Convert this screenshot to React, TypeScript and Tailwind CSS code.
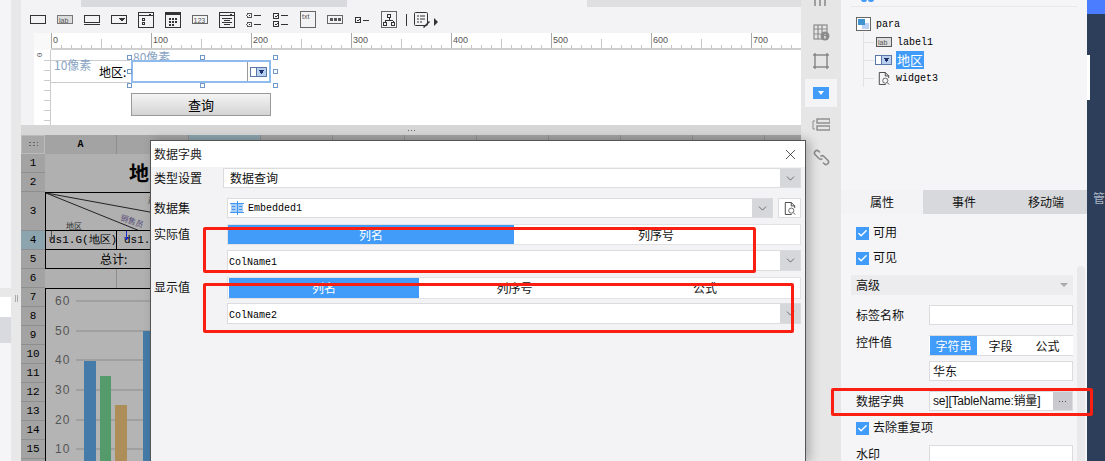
import React from 'react';
import { Check, ChevronDown, X } from 'lucide-react';

const mono = "[font-family:'Liberation_Mono',monospace]";

const ToolIcon: React.FC<{ children: React.ReactNode }> = ({ children }) => (
  <div className="flex w-[27px] shrink-0 justify-center">
    <svg width="18" height="18" viewBox="0 0 18 18" fill="none" stroke="#333" strokeWidth="1" shapeRendering="crispEdges">
      {children}
    </svg>
  </div>
);

// little dropdown widget glyph, used on the canvas and in the tree
const ComboGlyph = () => (
  <svg width="17" height="10" viewBox="0 0 17 10" shapeRendering="crispEdges">
    <rect x="0.5" y="0.5" width="16" height="9" fill="#fff" stroke="#5b77a8" />
    <rect x="7" y="1" width="9" height="8" fill="#b9cfee" />
    <line x1="6.5" y1="0" x2="6.5" y2="10" stroke="#5b77a8" />
    <path d="M8.5 3h6l-3 4z" fill="#1f2f6b" />
  </svg>
);

const PreviewGlyph = ({ size = 14 }: { size?: number }) => (
  <svg width={size} height={size + 1} viewBox="0 0 14 15" fill="none" stroke="#333" strokeWidth="1">
    <path d="M9 14.5H1.5V.5h7l4 4V7" />
    <path d="M8.5.5v4h4" />
    <circle cx="8.5" cy="10" r="3" stroke="#555" />
    <path d="M11 12.5l2 2" />
  </svg>
);

const Dots = ({ cls }: { cls: string }) => (
  <span className="flex gap-[2px]">
    <span className={`h-px w-px ${cls}`} />
    <span className={`h-px w-px ${cls}`} />
    <span className={`h-px w-px ${cls}`} />
  </span>
);

const toolbar = (
  <div className="flex h-[26px] shrink-0 items-center bg-[#f3f3f5]">
    <div className="w-[3px]" />
    <ToolIcon><rect x="1.5" y="4.5" width="15" height="8" /></ToolIcon>
    <ToolIcon>
      <rect x="1.5" y="4.5" width="15" height="8" fill="#ddd" stroke="#777" />
      <text x="3" y="11.5" fontSize="7" fill="#555" stroke="none" fontFamily="Liberation Sans">lab</text>
    </ToolIcon>
    <ToolIcon><rect x="1.5" y="4.5" width="15" height="7" /><line x1="1" y1="13.5" x2="17" y2="13.5" /></ToolIcon>
    <ToolIcon><rect x="1.5" y="4.5" width="15" height="8" /><path d="M9 7h6l-3 4z" fill="#333" stroke="none" /></ToolIcon>
    <ToolIcon>
      <rect x="1.5" y="1.5" width="15" height="15" />
      <line x1="1" y1="4.5" x2="17" y2="4.5" />
      <path d="M11 2.5h4l-2 2z" fill="#333" stroke="none" />
      <rect x="5.5" y="7.5" width="2" height="2" /><rect x="5.5" y="11.5" width="2" height="2" />
    </ToolIcon>
    <ToolIcon>
      <rect x="1.5" y="1.5" width="15" height="15" />
      <rect x="1" y="1" width="16" height="3" fill="#333" stroke="none" />
      <path d="M5 7h2v2H5zM8 7h2v2H8zM11 7h2v2h-2zM5 10h2v2H5zM8 10h2v2H8zM11 10h2v2h-2zM5 13h2v2H5zM8 13h2v2H8z" fill="#333" stroke="none" />
    </ToolIcon>
    <ToolIcon>
      <rect x="1.5" y="4.5" width="15" height="8" stroke="#666" />
      <text x="2.5" y="11.5" fontSize="7" fill="#555" stroke="none" fontFamily="Liberation Sans">123</text>
    </ToolIcon>
    <ToolIcon>
      <rect x="1.5" y="1.5" width="15" height="15" />
      <line x1="1" y1="4.5" x2="17" y2="4.5" />
      <path d="M11 2.5h4l-2 2z" fill="#333" stroke="none" />
      <path d="M4 7.5h10M6 9.5h6M4 11.5h10M6 13.5h6" />
    </ToolIcon>
    <ToolIcon>
      <circle cx="4.5" cy="4.5" r="2.5" stroke="#555" /><circle cx="4.5" cy="4.5" r="1" fill="#333" stroke="none" />
      <circle cx="4.5" cy="13.5" r="2.5" stroke="#555" /><circle cx="4.5" cy="13.5" r="1" fill="#333" stroke="none" />
      <path d="M9 4.5h7M9 13.5h7" />
    </ToolIcon>
    <ToolIcon>
      <rect x="1.5" y="2.5" width="5" height="5" /><rect x="1.5" y="10.5" width="5" height="5" />
      <path d="M3 5l1 1 2-2M3 13l1 1 2-2" stroke="#333" />
      <path d="M9 4.5h7M9 13.5h7" />
    </ToolIcon>
    <ToolIcon>
      <rect x="1.5" y="0.5" width="15" height="16" stroke="#666" />
      <text x="3" y="7.5" fontSize="7" fill="#555" stroke="none" fontFamily="Liberation Sans">txt</text>
    </ToolIcon>
    <ToolIcon>
      <rect x="1.5" y="4.5" width="15" height="8" stroke="#666" />
      <path d="M4 7h3v3H4zM8 7h3v3H8zM12 7h3v3h-3z" fill="#555" stroke="none" />
    </ToolIcon>
    <ToolIcon>
      <rect x="2.5" y="6.5" width="5" height="5" />
      <path d="M4 9l1 1 2-2" />
      <path d="M10 9.5h6" />
    </ToolIcon>
    <ToolIcon>
      <rect x="1.5" y="0.5" width="15" height="16" stroke="#666" />
      <rect x="7.5" y="3.5" width="3" height="3" />
      <rect x="3.5" y="11.5" width="3" height="3" /><rect x="11.5" y="11.5" width="3" height="3" />
      <path d="M9 6v3M5 9.5h8M5 10v2M13 10v2" />
    </ToolIcon>
    <div className="ml-[4px] mr-[6px] h-[12px] w-px bg-[#333]" />
    <svg width="18" height="18" viewBox="0 0 18 18" fill="none" stroke="#333">
      <rect x="1.5" y="1.5" width="13" height="13" rx="1" />
      <path d="M4 5h2M7 5h5M4 8h2M7 8h5M4 11h2M7 11h2" />
      <path d="M10 16l6-6 1 1-6 6z" fill="#333" stroke="none" />
    </svg>
    <svg className="ml-[3px] mt-[4px]" width="5" height="8" viewBox="0 0 5 8"><path d="M0 0l4 4-4 4z" fill="#333" /></svg>
  </div>
);

const HorizontalRuler = () => {
  const ticks = Array.from({ length: 76 }, (_, i) => i * 10);
  return (
    <svg className="block" width="750" height="17" viewBox="0 0 750 17" shapeRendering="crispEdges">
      {ticks.map((t) => {
        const major = t % 100 === 0;
        const mid = t % 50 === 0;
        return (
          <line key={t} x1={t + 0.5} x2={t + 0.5} y1={major ? 0 : mid ? 6 : 12} y2="16" stroke={major ? '#aaa' : '#c6c6c6'} />
        );
      })}
      {[0, 100, 200, 300, 400, 500, 600, 700].map((n) => (
        <text key={n} x={n + 2} y="10" fontSize="9" fill="#555" fontFamily="Liberation Sans" shapeRendering="auto">{n}</text>
      ))}
    </svg>
  );
};

const Handle = ({ cls }: { cls: string }) => (
  <div className={`absolute h-[5px] w-[5px] border border-[#6f9ac7] bg-white ${cls}`} />
);

const FormCanvas = () => (
  <div className="relative h-[75px] flex-1 bg-white">
    {/* px positions are the designer's own canvas */}
    <div className="absolute left-0 top-[10px] h-px w-[79px] bg-[#ccc]" />
    <div className="absolute left-0 top-[32px] h-px w-[79px] bg-[#ccc]" />
    <div className="absolute left-[3px] top-[6px] text-[12px] leading-[18px] text-[#8aa5c4]">10像素</div>
    <div className="absolute left-[82px] top-0 text-[12px] leading-[14px] text-[#8aa5c4]">80像素</div>
    <div className="absolute left-[48px] top-[13px] text-[12px] leading-[18px] text-black">地区:</div>
    <div className="absolute left-[80px] top-[10px] flex h-[23px] w-[140px] items-center justify-end border-2 border-[#8fbcec] bg-white pr-[2px]">
      <div className="mr-[2px] h-full w-px bg-[#999]" />
      <ComboGlyph />
    </div>
    <Handle cls="left-[76px] top-[5px]" />
    <Handle cls="left-[149px] top-[5px]" />
    <Handle cls="left-[222px] top-[5px]" />
    <Handle cls="left-[76px] top-[19px]" />
    <Handle cls="left-[222px] top-[19px]" />
    <Handle cls="left-[76px] top-[33px]" />
    <Handle cls="left-[149px] top-[33px]" />
    <Handle cls="left-[222px] top-[33px]" />
    <div className="absolute left-[80px] top-[43px] flex h-[23px] w-[140px] items-center justify-center border border-[#999] bg-gradient-to-b from-[#f4f4f4] to-[#d4d4d4] text-[13px] text-black">
      查询
    </div>
  </div>
);

const rowHeights = [19, 19, 39, 19, 19, 19, 19, 19, 19, 19, 19, 19, 19, 19, 19];

const SheetChart = () => (
  <svg className="block" width="756" height="172" viewBox="0 0 756 172">
    {[
      ['60', 12],
      ['50', 42],
      ['40', 71],
      ['30', 101],
      ['20', 131],
      ['10', 160],
    ].map(([label, y]) => (
      <g key={label}>
        <line x1="30" x2="110" y1={y as number} y2={y as number} stroke="#8b8b8b" />
        <text x="9" y={(y as number) + 4} fontSize="12" fill="#555" fontFamily="Liberation Sans" letterSpacing="1">{label}</text>
      </g>
    ))}
    <rect x="38" y="72" width="12" height="100" fill="#457ba8" />
    <rect x="54" y="87" width="11" height="85" fill="#559a6a" />
    <rect x="69" y="116" width="12" height="56" fill="#ad8e58" />
    <rect x="97" y="42" width="12" height="130" fill="#457ba8" />
  </svg>
);

const ExpandArrow = ({ color }: { color: string }) => (
  <svg className="absolute top-0" width="5" height="11" viewBox="0 0 5 11" fill="none" stroke={color}>
    <path d="M2.5 0v9M.5 6l2 3 2-3" />
  </svg>
);

const Sheet = () => (
  <div className="flex min-h-0 flex-1 flex-col overflow-hidden bg-[#b0b0b0]">
    <div className="flex h-[19px] shrink-0 bg-[#a3a3a3]">
      <div className="flex w-[24px] shrink-0 items-center justify-center border border-[#bbb] bg-[#a8a8a8]">
        <span className="h-[7px] w-[10px] bg-[radial-gradient(#666_1px,transparent_1px)] bg-[length:4px_3px]" />
      </div>
      <div className={`flex w-[72px] shrink-0 items-center justify-center border-r border-[#8e8e8e] text-[10px] font-bold text-black ${mono}`}>A</div>
      <div className="w-[72px] shrink-0 border-r border-[#8e8e8e]" />
      <div className="w-[72px] shrink-0 border-r border-[#8e8e8e] bg-[#8ba4ad]" />
      {[0, 1, 2, 3, 4, 5, 6].map((i) => (
        <div key={i} className="w-[72px] shrink-0 border-r border-[#8e8e8e]" />
      ))}
    </div>
    <div className="flex min-h-0 flex-1">
      <div className="flex w-[24px] shrink-0 flex-col bg-[#a3a3a3]">
        {rowHeights.map((h, i) => (
          <div
            key={i}
            style={{ height: h }}
            className={`flex shrink-0 items-center justify-center border-b border-[#8e8e8e] text-[11px] text-black ${i === 3 ? 'bg-[#8ba4ad]' : 'bg-[#a3a3a3]'} ${mono}`}
          >
            {i + 1}
          </div>
        ))}
      </div>
      <div className="flex min-w-0 flex-1 flex-col">
        <div className="flex h-[38px] shrink-0 items-center pl-[84px] text-[20px] font-bold text-black">地</div>
        <div className="relative h-[39px] shrink-0 border-y border-l border-black">
          <svg className="block" width="140" height="37" viewBox="0 0 140 37">
            <line x1="0" y1="0" x2="120" y2="22" stroke="#222" />
            <line x1="0" y1="0" x2="94" y2="38" stroke="#222" />
          </svg>
          <span className="absolute left-[20px] top-[28px] text-[8px] leading-[10px] text-[#333]">地区</span>
          <span className="absolute left-[74px] top-[23px] rotate-[20deg] text-[8px] leading-[10px] text-[#5a4f7a]">销售员</span>
          <span className="absolute left-[102px] top-[2px] text-[8px] leading-[10px] text-[#333]">产</span>
        </div>
        <div className="flex h-[19px] shrink-0 border-b border-l border-black text-[11px] text-black">
          <div className={`relative flex w-[71px] items-center whitespace-nowrap border-r border-black pl-[3px] ${mono}`}>
            <ExpandArrow color="#555" />
            ds1.G(地区)
          </div>
          <div className={`relative flex items-center whitespace-nowrap pl-[7px] ${mono}`}>
            <ExpandArrow color="#1b2fd0" />
            ds1.G
          </div>
        </div>
        <div className="flex h-[19px] w-[200px] shrink-0 items-center border-b border-l border-black pl-[54px] text-[12px] text-black">总计:</div>
        <div className="flex h-[19px] shrink-0">
          <div className="w-[72px] border-r border-[#8e8e8e]" />
        </div>
        <div className="border-l border-t border-black bg-[#b4b4b4]">
          <SheetChart />
        </div>
      </div>
    </div>
  </div>
);

const Select = ({ children, right = true }: { children?: React.ReactNode; right?: boolean }) => (
  <div className="flex h-[20px] min-w-0 flex-1 items-center border border-[#dcdcdf] bg-white">
    <div className="min-w-0 flex-1 truncate">{children}</div>
    {right && (
      <div className="flex h-full w-[20px] items-center justify-center bg-[#d6d7db]">
        <ChevronDown size={13} strokeWidth={1.2} color="#333" />
      </div>
    )}
  </div>
);

const Dialog = () => (
  <div className="absolute left-[150px] top-[140px] flex h-[322px] w-[656px] flex-col border border-[#555] bg-[#f3f3f5] shadow-[4px_0_10px_rgba(0,0,0,0.25)]">
    <div className="flex h-[26px] items-center justify-between bg-white pl-[3px] pr-[6px] text-[12px] text-[#222]">
      <span>数据字典</span>
      <X size={17} strokeWidth={1} color="#111" />
    </div>
    <div className="flex flex-col pl-[3px] pr-[4px] pt-px text-[12px] text-[#111]">
      <div className="flex items-center">
        <span className="w-[69px] shrink-0">类型设置</span>
        <Select><span className="pl-[6px]">数据查询</span></Select>
      </div>
      <div className="mt-[10px] flex items-center">
        <span className="w-[73px] shrink-0">数据集</span>
        <Select>
          <div className="flex items-center">
            <svg className="ml-[2px] shrink-0" width="14" height="14" viewBox="0 0 14 14" shapeRendering="crispEdges">
              <rect x="1" y="3" width="12" height="8" fill="#a9cdf6" />
              <path d="M0 2.5h14M0 11.5h14M7 0v14" stroke="#3f97f2" fill="none" />
              <path d="M2 5.5h3M9 5.5h3M2 8h3M9 8h3" stroke="#3f97f2" />
            </svg>
            <span className={`ml-[4px] text-[10px] text-black ${mono}`}>Embedded1</span>
          </div>
        </Select>
        <div className="ml-[5px] flex h-[20px] w-[23px] shrink-0 items-center justify-center border border-[#dcdcdf] bg-white">
          <PreviewGlyph size={12} />
        </div>
      </div>
      <div className="mt-[6px] flex">
        <span className="w-[73px] shrink-0 leading-[20px]">实际值</span>
        <div className="flex min-w-0 flex-1 flex-col gap-[5px]">
          <div className="flex h-[21px] border border-[#e2e2e5] bg-white">
            <div className="flex w-[286px] items-center justify-center bg-[#409bf9] text-white">列名</div>
            <div className="flex flex-1 items-center justify-center pr-[2px]">列序号</div>
          </div>
          <Select><span className={`pl-px text-[10px] text-black ${mono}`}>ColName1</span></Select>
        </div>
      </div>
      <div className="mt-[6px] flex">
        <span className="w-[73px] shrink-0 leading-[20px]">显示值</span>
        <div className="flex min-w-0 flex-1 flex-col gap-[4px]">
          <div className="flex h-[22px] border border-[#e2e2e5] bg-white pl-px">
            <div className="flex w-[190px] items-center justify-center bg-[#409bf9] text-white">列名</div>
            <div className="flex w-[191px] items-center justify-center">列序号</div>
            <div className="flex flex-1 items-center justify-center">公式</div>
          </div>
          <Select><span className={`pl-px text-[10px] text-black ${mono}`}>ColName2</span></Select>
        </div>
      </div>
    </div>
  </div>
);

const RailIcon: React.FC<{ active?: boolean; children: React.ReactNode; h: number }> = ({ active, children, h }) => (
  <div style={{ height: h }} className={`flex shrink-0 items-center justify-center ${active ? 'mx-[4px] bg-[#f4f4f6]' : ''}`}>
    {children}
  </div>
);

const IconRail = () => (
  <div className="flex w-[40px] shrink-0 flex-col bg-[#e6e6e6] pt-0">
    <RailIcon h={20}>
      <svg className="-mt-[16px]" width="16" height="16" viewBox="0 0 16 16" fill="none" stroke="#888" strokeWidth="1.5"><path d="M2 0v12M7 0v12M12 0v12M0 5h15" /></svg>
    </RailIcon>
    <RailIcon h={24}>
      <svg width="17" height="17" viewBox="0 0 17 17" fill="none" stroke="#8b8b8b" strokeWidth="1.2">
        <rect x="1" y="1" width="13" height="14" /><path d="M1 5h13M1 10h8M5 1v14M9 1v8" />
        <circle cx="12" cy="12" r="4.5" fill="#8b8b8b" stroke="none" />
        <path d="M12 10v.6M12 12v2.5" stroke="#fff" />
      </svg>
    </RailIcon>
    <RailIcon h={35}>
      <svg className="-mt-[2px]" width="18" height="18" viewBox="0 0 18 18" fill="none" stroke="#8b8b8b" strokeWidth="1.5">
        <rect x="3" y="3" width="12" height="12" />
        <path d="M1 3h3M14 3h3M1 15h3M14 15h3M3 1v3M15 1v3M3 14v3M15 14v3" />
      </svg>
    </RailIcon>
    <RailIcon h={28} active>
      <div className="flex h-[12px] w-[16px] items-center justify-center bg-[#409bf9]">
        <span className="h-0 w-0 border-x-[3px] border-t-[4px] border-x-transparent border-t-white" />
      </div>
    </RailIcon>
    <RailIcon h={36}>
      <svg width="18" height="14" viewBox="0 0 18 14" fill="none">
        <rect x="5" y="1" width="13" height="4" stroke="#8b8b8b" strokeWidth="1.4" />
        <rect x="5" y="8" width="13" height="4" stroke="#8b8b8b" strokeWidth="1.4" />
        <path d="M3 3H1v8h2" stroke="#8b8b8b" />
      </svg>
    </RailIcon>
    <RailIcon h={28}>
      <svg width="17" height="17" viewBox="0 0 17 17" fill="none" stroke="#8b8b8b" strokeWidth="1.6">
        <path d="M7 3.5 5.5 2a2.5 2.5 0 0 0-3.5 3.5l4 4a2.5 2.5 0 0 0 3.5 0" />
        <path d="M10 13.5l1.5 1.5a2.5 2.5 0 0 0 3.5-3.5l-4-4a2.5 2.5 0 0 0-3.5 0" />
      </svg>
    </RailIcon>
  </div>
);

const TreeRow: React.FC<{ icon: React.ReactNode; children: React.ReactNode }> = ({ icon, children }) => (
  <div className="flex h-[18px] items-center">
    <span className="h-px w-[10px] bg-[#e2e2e4]" />
    <span className="flex w-[19px] justify-center">{icon}</span>
    {children}
  </div>
);

const Tree = () => (
  <div className="h-[190px] shrink-0">
    <div className="mx-[10px] flex h-[7px] items-start justify-start gap-[17px] border-b border-[#e8e8ea] pl-[10px]">
      <span className="-mt-[3px] flex gap-[1px]">
        <span className="h-[5px] w-[6px] rounded-full bg-[#409bf9]" />
        <span className="h-[5px] w-[6px] rounded-full bg-[#409bf9]" />
      </span>
    </div>
    <div className="pl-[15px] pt-[9px]">
      <div className="flex h-[16px] items-center">
        <svg width="15" height="15" viewBox="0 0 15 15" shapeRendering="crispEdges">
          <rect x="0.5" y="0.5" width="14" height="13" fill="#fff" stroke="#666" />
          <rect x="6" y="6" width="7" height="6" fill="#b9d2f5" />
          <rect x="2" y="2" width="7" height="6" fill="#3f93cf" />
        </svg>
        <span className={`ml-[5px] text-[10px] text-black ${mono}`}>para</span>
      </div>
      <div className="ml-[7px] border-l border-[#e2e2e4] pt-px">
        <TreeRow
          icon={
            <svg width="16" height="10" viewBox="0 0 16 10" shapeRendering="crispEdges">
              <rect x="0.5" y="0.5" width="15" height="9" fill="#ddd" stroke="#555" />
              <text x="2" y="8" fontSize="7" fill="#555" fontFamily="Liberation Sans">lab</text>
            </svg>
          }
        >
          <span className={`ml-[4px] text-[10px] text-black ${mono}`}>label1</span>
        </TreeRow>
        <TreeRow icon={<ComboGlyph />}>
          <span className="ml-[3px] flex h-[18px] w-[28px] items-center justify-center bg-[#409bf9] text-[13px] text-white">地区</span>
        </TreeRow>
        <TreeRow icon={<PreviewGlyph size={12} />}>
          <span className={`ml-[3px] text-[10px] text-black ${mono}`}>widget3</span>
        </TreeRow>
      </div>
    </div>
  </div>
);

const CheckRow = ({ label, cls }: { label: string; cls: string }) => (
  <div className={`flex h-[14px] items-center pl-[15px] ${cls}`}>
    <span className="flex h-[13px] w-[13px] items-center justify-center bg-[#409bf9]">
      <Check size={11} strokeWidth={3} color="#fff" />
    </span>
    <span className="ml-[4px] -translate-y-px text-[12px] text-[#111]">{label}</span>
  </div>
);

const FieldRow: React.FC<{ label: string; cls: string; labelCls?: string; children: React.ReactNode }> = ({ label, cls, labelCls, children }) => (
  <div className={`flex ${labelCls ? 'items-start' : 'items-center'} pl-[15px] ${cls}`}>
    <span className={`w-[73px] shrink-0 text-[12px] text-[#111] ${labelCls ?? 'leading-[20px]'}`}>{label}</span>
    <div className="flex w-[144px] flex-col gap-[5px]">{children}</div>
  </div>
);

const inputCls = 'h-[20px] border border-[#dcdcdf] bg-white text-[12px] leading-[18px] text-[#111]';

const PropsPanel = () => (
  <div className="relative min-h-0 flex-1">
    <div className="flex h-[24px] text-[12px] text-[#111]">
      <div className="flex w-[82px] items-center justify-center bg-[#f3f3f5]">属性</div>
      <div className="flex flex-1 items-center justify-center bg-[#d8d9dc]">事件</div>
      <div className="flex w-[82px] items-center justify-center bg-[#d8d9dc]">移动端</div>
    </div>
    <CheckRow label="可用" cls="mt-[12px]" />
    <CheckRow label="可见" cls="mt-[11px]" />
    <div className="absolute bottom-0 right-[2px] top-[76px] w-[8px] rounded-t bg-[#e9e9eb]" />
    <div className="relative ml-[10px] mt-[10px] flex h-[20px] w-[222px] items-center justify-between bg-[#ececee] pl-[5px] pr-[5px] text-[12px] text-[#111]">
      <span>高级</span>
      <span className="h-0 w-0 border-x-[4px] border-t-[4px] border-x-transparent border-t-[#aaa]" />
    </div>
    <FieldRow label="标签名称" cls="relative mt-[10px]"><div className={inputCls} /></FieldRow>
    <FieldRow label="控件值" cls="relative mt-[10px]" labelCls="leading-[12px] pt-px">
      <div className="flex h-[21px] border-b border-t border-[#dcdcdf] bg-white pl-px text-[12px] text-[#111]">
        <div className="flex w-[47px] items-center justify-center bg-[#409bf9] text-white">字符串</div>
        <div className="flex w-[47px] items-center justify-center">字段</div>
        <div className="flex w-[47px] items-center justify-center">公式</div>
      </div>
      <div className={`${inputCls} pl-[3px]`}>华东</div>
    </FieldRow>
    <FieldRow label="数据字典" cls="relative mt-[10px]">
      <div className="flex h-[20px] items-center border border-[#dcdcdf] bg-white">
        <span className="w-[123px] shrink-0 overflow-hidden whitespace-nowrap pl-[3px] text-[12px] tracking-[-0.2px] text-[#111] [font-family:'Liberation_Sans','Noto_Sans_CJK_SC',sans-serif]">se][TableName:销量]</span>
        <span className="flex h-full flex-1 items-center justify-center bg-[#c9c9cf]">
          <Dots cls="bg-[#555]" />
        </span>
      </div>
    </FieldRow>
    <CheckRow label="去除重复项" cls="relative mt-[10px]" />
    <FieldRow label="水印" cls="relative mt-[10px]" labelCls="leading-[12px] pt-[3px]"><div className={inputCls} /></FieldRow>
  </div>
);

const App: React.FC = () => {
  return (
    <div className="relative flex h-[461px] w-[1105px] overflow-hidden bg-[#f3f3f5] [font-family:'Noto_Sans_CJK_SC',sans-serif]">
      {/* left dock, mostly cropped */}
      <div className="flex w-[11px] shrink-0 flex-col bg-[#f5f5f7]">
        <div className="h-[288px] shrink-0" />
        <div className="h-[9px] shrink-0 bg-[#e8e8e8]" />
        <div className="h-[20px] shrink-0 bg-white" />
        <div className="h-[26px] shrink-0 bg-[#d9dadf]" />
      </div>
      <div className="flex w-[10px] shrink-0 justify-center gap-px bg-[#e8e8e8] pt-[295px]">
        <span className="h-[7px] w-px bg-[#aaa]" />
        <span className="h-[7px] w-px bg-[#aaa]" />
      </div>

      {/* centre column */}
      <div className="flex w-[780px] shrink-0 flex-col">
        <div className="flex h-[7px] shrink-0">
          <div className="w-[60px]" />
          <div className="w-[266px] bg-[#d9dadd]" />
          <div className="w-[240px]" />
          <div className="flex-1 bg-[#dfdfe1]" />
        </div>
        {toolbar}
        <div className="flex h-[17px] shrink-0">
          <div className="w-[13px] shrink-0" />
          <div className="w-[17px] shrink-0 bg-[#f9f9f9]" />
          <div className="flex-1 overflow-hidden border-b-2 border-[#cfcfcf] bg-white">
            <HorizontalRuler />
          </div>
        </div>
        <div className="flex h-[75px] shrink-0">
          <div className="w-[13px] shrink-0" />
          <div className="relative w-[17px] shrink-0 border-r border-[#ccc] bg-white">
            <span className={`absolute left-[3px] top-[0px] rotate-90 text-[8px] leading-[10px] text-[#555] ${mono}`}>0</span>
            <div className="ml-auto mt-[10px] h-[62px] w-[6px] bg-[repeating-linear-gradient(to_bottom,#ccc_0,#ccc_1px,transparent_1px,transparent_10px)]" />
          </div>
          <FormCanvas />
        </div>
        <div className="flex h-[10px] shrink-0 items-center justify-center bg-[#d6d6d6] pl-[1px]">
          <Dots cls="bg-[#666]" />
        </div>
        <Sheet />
      </div>

      <IconRail />

      {/* right panel */}
      <div className="flex w-[246px] shrink-0 flex-col bg-[#f5f5f7]">
        <Tree />
        <PropsPanel />
      </div>

      {/* dark rail at the window edge */}
      <div className="relative flex-1 bg-[#2c3e5a]">
        <div className="h-[14px] bg-[#4a7dff]" />
        <div className="absolute left-0 top-[55px] h-[45px] w-[3px] bg-white" />
        <span className="absolute left-[6px] top-[190px] text-[12px] leading-[16px] text-[#aab4c4]">管</span>
      </div>

      <Dialog />

      {/* red annotations on top of the screenshot */}
      <div className="absolute left-[203px] top-[227px] h-[46px] w-[553px] rounded-[2px] border-[3px] border-[#fb1f12]" />
      <div className="absolute left-[203px] top-[283px] h-[50px] w-[591px] rounded-[2px] border-[3px] border-[#fb1f12]" />
      <div className="absolute left-[831px] top-[388px] h-[28px] w-[262px] rounded-[2px] border-[3px] border-[#fb1f12]" />
    </div>
  );
};

export default App;
